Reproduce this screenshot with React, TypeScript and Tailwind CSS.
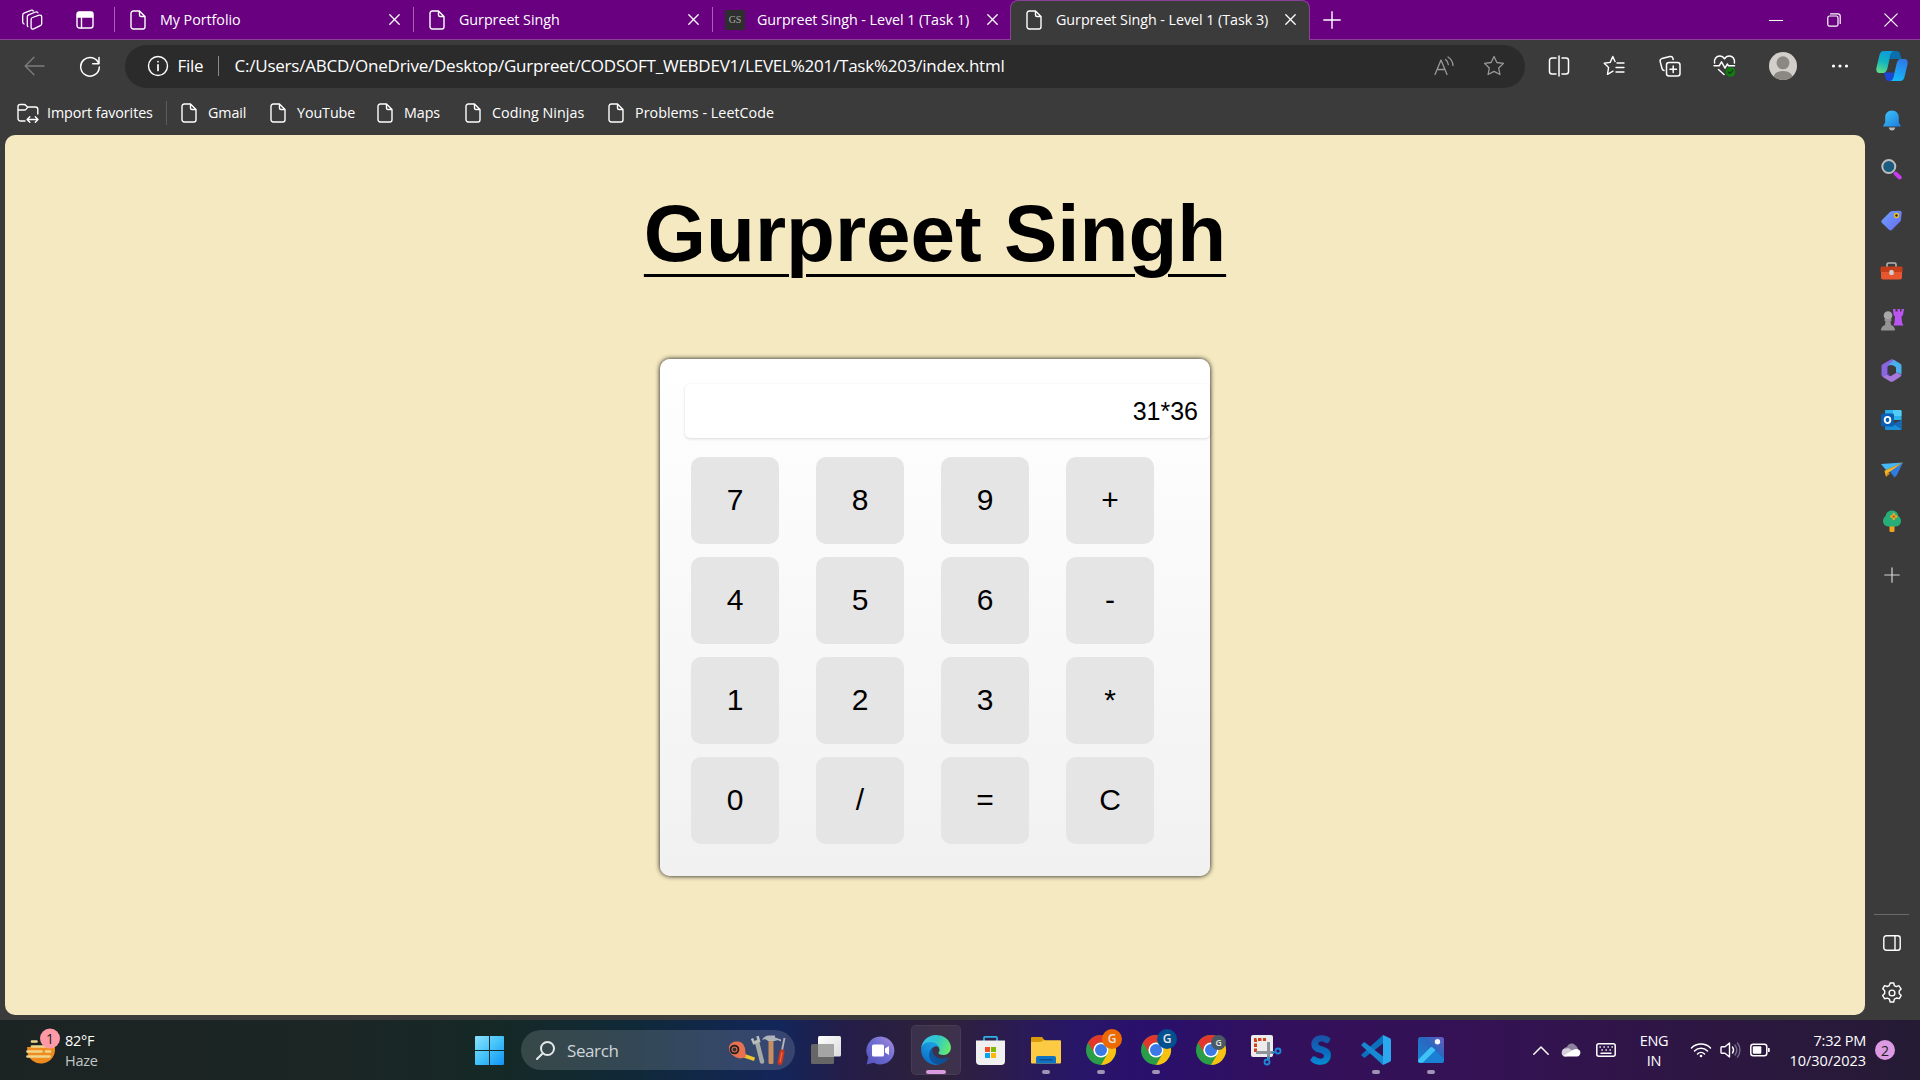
import type { ReactNode } from "react";

type SvgProps = { w: number; h: number; children: ReactNode; className?: string; sw?: number };

function Line({ w, h, children, className = "", sw = 1.4 }: SvgProps) {
  return (
    <svg
      width={w}
      height={h}
      viewBox={`0 0 ${w} ${h}`}
      fill="none"
      stroke="currentColor"
      strokeWidth={sw}
      strokeLinecap="round"
      strokeLinejoin="round"
      className={`shrink-0 ${className}`}
    >
      {children}
    </svg>
  );
}

function Art({ w, h, children, className = "" }: SvgProps) {
  return (
    <svg width={w} height={h} viewBox={`0 0 ${w} ${h}`} className={`shrink-0 overflow-visible ${className}`}>
      {children}
    </svg>
  );
}

const FileIcon = () => (
  <Line w={16} h={20}>
    <path d="M9.5 1H3.2A2.2 2.2 0 0 0 1 3.2v13.6A2.2 2.2 0 0 0 3.2 19h9.6a2.2 2.2 0 0 0 2.2-2.2V6.5L9.5 1v4A1.5 1.5 0 0 0 11 6.5h4" />
  </Line>
);

const CloseIcon = () => (
  <Line w={11} h={11} sw={1.3}>
    <path d="M.8.8l9.4 9.4M10.2.8L.8 10.2" />
  </Line>
);

function Tab({ title, gs }: { title: string; gs?: boolean }) {
  return (
    <div className="flex h-full w-[299px] shrink-0 items-center">
      <div className="h-[25px] w-px bg-[#a662b3]" />
      {gs ? (
        <div className="ml-3 mr-3 flex h-5 w-5 items-center justify-center bg-[#2e2e2e] font-['Liberation_Serif',serif] text-[10px] text-[#a9a9a9]">
          GS
        </div>
      ) : (
        <div className="ml-[15px] mr-[14px]">
          <FileIcon />
        </div>
      )}
      <span className="flex-1 whitespace-nowrap">{title}</span>
      <div className="mr-[13px]">
        <CloseIcon />
      </div>
    </div>
  );
}

function TabStrip() {
  return (
    <div className="flex h-[40px] shrink-0 items-center border-b border-[#8b419a] bg-[#68007f] text-[14.3px] tracking-[-0.04px] text-white">
      <div className="flex w-[114px] shrink-0 items-center gap-[33px] pl-[21px]">
        <Line w={22} h={22} sw={1.3}>
          <path d="M11.5 8.5l6.6-2.3c1.3-.5 2.6.3 2.6 1.6v7c0 .9-.5 1.6-1.4 1.9l-6.600 3.200c-1.300.600-2.600-.2-2.600-1.500v-7.800c0-.9.500-1.700 1.400-2.100z" />
          <path d="M6.800 17.500c-.3-.3-.5-.8-.5-1.300V7.800c0-.9.5-1.500 1.300-1.900L14.500 3c1.100-.4 2 0 2.400.8M3 15c-.800-.4-1.300-1-1.300-1.900V6c0-.9.500-1.500 1.300-1.900l6.900-2.700c1-.4 1.900-.1 2.400.6" />
        </Line>
        <Line w={18} h={18} sw={1.4}>
          <rect x="1" y="1" width="16" height="16" rx="2.5" />
          <path d="M1.500 1.500h15v4.500h-15z" fill="currentColor" />
          <path d="M5.500 6v11" />
        </Line>
      </div>
      <Tab title="My Portfolio" />
      <Tab title="Gurpreet Singh" />
      <Tab title="Gurpreet Singh - Level 1 (Task 1)" gs />
      <div className="-ml-px flex h-[40px] w-[300px] shrink-0 items-center self-start rounded-t-[8px] border border-b-0 border-[#8b419a] bg-[#3b3b3b] pb-[2px]">
        <div className="ml-[15px] mr-[14px]">
          <FileIcon />
        </div>
        <span className="flex-1 whitespace-nowrap">Gurpreet Singh - Level 1 (Task 3)</span>
        <div className="mr-[13px]">
          <CloseIcon />
        </div>
      </div>
      <div className="ml-[13px] flex-1">
        <Line w={18} h={18} sw={1.4}>
          <path d="M9 .8v16.400M.8 9h16.400" />
        </Line>
      </div>
      <div className="flex items-center gap-[43.500px] pr-[22px]">
        <Line w={14} h={14} sw={1.2}>
          <path d="M.5 7.500h13" />
        </Line>
        <Line w={14} h={14} sw={1.2}>
          <rect x=".8" y="3" width="10.200" height="10.200" rx="1.800" />
          <path d="M3.500.8h7.400a2.300 2.300 0 0 1 2.300 2.300v7.400" />
        </Line>
        <Line w={14} h={14} sw={1.2}>
          <path d="M.8.8l12.400 12.400M13.200.8L.8 13.200" />
        </Line>
      </div>
    </div>
  );
}

function Toolbar() {
  return (
    <div className="flex h-[53px] shrink-0 items-center">
      <div className="flex w-[125px] shrink-0 items-center gap-[34px] pb-px pl-[24px]">
        <Line w={21} h={20} className="text-[#7c7c7c]">
          <path d="M20 10H1.500M10 1.200L1.200 10l8.800 8.800" />
        </Line>
        <Line w={22} h={22} sw={1.500}>
          <path d="M19.800 8.800A9.300 9.300 0 1 0 20.300 12M20 2.500v6.300h-6.300" />
        </Line>
      </div>
      <div className="flex h-[43px] w-[1400px] shrink-0 items-center rounded-full bg-[#2b2b2b] pb-px">
        <Line w={22} h={22} className="ml-[21.500px]" sw={1.400}>
          <circle cx="11" cy="11" r="9.500" />
          <path d="M11 9.800v5.700M11 6.500v.2" strokeWidth="1.700" />
        </Line>
        <span className="ml-[9px] w-[40px] text-[17px] tracking-[-0.250px]">File</span>
        <div className="h-5 w-px bg-[#8a8a8a]" />
        <span className="ml-[16px] flex-1 whitespace-nowrap text-[17px] tracking-[-0.230px]">
          C:/Users/ABCD/OneDrive/Desktop/Gurpreet/CODSOFT_WEBDEV1/LEVEL%201/Task%203/index.html
        </span>
        <Line w={20} h={20} className="mr-[29px] text-[#9a9a9a]" sw={1.300}>
          <path d="M1 18.500L7 4l6 14.500M3 13.500h8M11.500 3.500c1.700 1.200 2.600 2.800 2.800 5M14 1c3 1.800 4.700 4.500 5 8.500" />
        </Line>
        <Line w={22} h={22} className="mr-[20px] text-[#9a9a9a]" sw={1.300}>
          <path d="M11 1.500l2.900 6 6.600.9-4.800 4.600 1.200 6.500L11 16.400l-5.900 3.100 1.200-6.500L1.500 8.400l6.600-.9z" />
        </Line>
      </div>
      <div className="flex flex-1 items-center pb-px">
        <Line w={22} h={22} className="ml-[23px]" sw={1.500}>
          <path d="M11 1v20M8 3H4a2.500 2.500 0 0 0-2.500 2.500v11A2.500 2.500 0 0 0 4 19h4M14 3h4a2.500 2.500 0 0 1 2.500 2.500v11A2.500 2.500 0 0 1 18 19h-4" />
        </Line>
        <Line w={22} h={22} className="ml-[33px]" sw={1.400}>
          <path d="M12 6.500L9.800 1.500 7.200 7.400l-6 .8 4.400 4.200-1.100 7L10 16.200M14 8h7M13 12.500h8M13 17h8" />
        </Line>
        <Line w={22} h={22} className="ml-[34px]" sw={1.500}>
          <rect x="7.500" y="7.500" width="13.500" height="13.500" rx="2.500" />
          <path d="M14.200 11v6.500M11 14.200h6.500M5 15.500c-1-.2-1.700-.9-2-2L1.200 6.600c-.4-1.500.3-2.600 1.700-3l8-2c1.500-.4 2.600.3 3 1.700l.3 1.200" />
        </Line>
        <Line w={24} h={24} className="ml-[32px]" sw={1.500}>
          <path d="M1.600 9C.8 4.800 3.500 2 6.700 2c2 0 3.600 1 4.800 2.800C12.700 3 14.300 2 16.300 2c3.300 0 5.900 2.800 5.100 7M1 11.800h5.200l2.300-4 3.500 6.400 2.300-4.200 1.200 1.800H21.500M5.500 15.500l5.500 5" />
          <circle cx="17.500" cy="18" r="4.800" fill="#107c10" stroke="none" />
          <path d="M15.300 18l1.500 1.500 3-3" stroke="#1a3a1a" strokeWidth="1.200" />
        </Line>
        <Art w={28} h={28} className="ml-[32px]">
          <clipPath id="avatar"><circle cx="14" cy="14" r="14" /></clipPath>
          <g clipPath="url(#avatar)">
            <path d="M0 0h28v28H0z" fill="#d2cfcb" />
            <circle cx="14" cy="10.800" r="6.500" fill="#8b8884" />
            <path d="M4 28c0-6 4-9 10-9s10 3 10 9z" fill="#8b8884" />
          </g>
        </Art>
        <Art w={18} h={4} className="ml-[34px]">
          <circle cx="2.500" cy="2" r="1.600" fill="#fff" />
          <circle cx="9" cy="2" r="1.600" fill="#fff" />
          <circle cx="15.500" cy="2" r="1.600" fill="#fff" />
        </Art>
      </div>
    </div>
  );
}

function Bookmark({ title, className }: { title: string; className: string }) {
  return (
    <div className={`flex shrink-0 items-center gap-[11px] whitespace-nowrap ${className}`}>
      <FileIcon />
      <span>{title}</span>
    </div>
  );
}

function Bookmarks() {
  return (
    <div className="flex h-[42px] shrink-0 items-center pb-[2px] pl-[17px] text-[14.300px] tracking-[-0.080px]">
      <Line w={22} h={20} sw={1.400}>
        <path d="M8 18H3.500A2.500 2.500 0 0 1 1 15.500v-12A2 2 0 0 1 3 1.500h4.200c.6 0 1.100.2 1.500.7l1.800 1.800H18.500A2.300 2.300 0 0 1 20.800 6.300V11M1 7h6.500c.6 0 1-.2 1.400-.6l1.800-2M10.500 16.500h10M12.800 13.800l-2.700 2.700 2.700 2.700M18.300 13.800l2.700 2.700-2.700 2.700" />
      </Line>
      <span className="ml-[8px] w-[119px] whitespace-nowrap">Import favorites</span>
      <div className="h-6 w-px bg-[#5c5c5c]" />
      <Bookmark title="Gmail" className="ml-[14px] w-[89px]" />
      <Bookmark title="YouTube" className="w-[107px]" />
      <Bookmark title="Maps" className="w-[88px]" />
      <Bookmark title="Coding Ninjas" className="w-[143px] tracking-[0.050px]" />
      <Bookmark title="Problems - LeetCode" className="tracking-[0.030px]" />
    </div>
  );
}

const KEYS = ["7", "8", "9", "+", "4", "5", "6", "-", "1", "2", "3", "*", "0", "/", "=", "C"];

function Calculator() {
  return (
    <div className="mt-[69px] h-[517px] w-[550px] rounded-[10px] bg-gradient-to-b from-white to-[#f1f1f1] pt-[25px] shadow-[0_0_5px_rgba(0,0,0,0.95)]">
      <div className="ml-[25px] flex h-[54px] items-center justify-end rounded-[5px] bg-white pt-px pr-[12px] text-[25px] shadow-[0_1px_3px_rgba(0,0,0,0.14)]">
        31*36
      </div>
      <div className="ml-[31px] mt-[19px] grid w-max grid-cols-4 gap-x-[37px] gap-y-[13px]">
        {KEYS.map((k) => (
          <button key={k} className="h-[87px] w-[88px] rounded-[10px] bg-[#e5e5e5] pb-[2px] text-[30px]">
            {k}
          </button>
        ))}
      </div>
    </div>
  );
}

function Page() {
  return (
    <div className="ml-[5px] flex h-[880px] flex-col items-center rounded-[10px] bg-[#f5e9c1] font-['Liberation_Sans',Arial,sans-serif] text-black">
      <h1 className="mt-[53px] whitespace-nowrap text-[80px] leading-[92px] font-bold underline decoration-[3px] underline-offset-[13px]">
        Gurpreet Singh
      </h1>
      <div className="mt-[10px]">
        <Calculator />
      </div>
    </div>
  );
}

function SideItem({ children }: { children: ReactNode }) {
  return <div className="flex h-[50px] items-center justify-center">{children}</div>;
}

function Sidebar() {
  return (
    <div className="flex w-[55px] shrink-0 flex-col pr-[2px]">
      <div className="flex h-[53px] items-center justify-center pb-[2px]">
        <Art w={32} h={32}>
          <defs>
            <linearGradient id="cpA" x1="0.600" y1="0" x2="0.300" y2="1">
              <stop offset="0.100" stopColor="#0e9fd8" />
              <stop offset="0.500" stopColor="#12b5c0" />
              <stop offset="1" stopColor="#5fdc85" />
            </linearGradient>
            <linearGradient id="cpB" x1="0.700" y1="0" x2="0.300" y2="1">
              <stop offset="0" stopColor="#2f78e8" />
              <stop offset="1" stopColor="#14bdf8" />
            </linearGradient>
          </defs>
          <path d="M15 1h5.500c2 0 3 1 3.500 3l1.500 5H14z" fill="#0a6fae" />
          <path d="M17 31h-4c-2 0-3-1-3.500-3L8 22.500h10z" fill="#1c48d8" />
          <path d="M8 1h10c-2.500.4-3 2-3.700 4.500L11.500 18c-.9 3.500-2 5-5 5H4c-3 0-4.300-2-3.500-5.500L3.500 5C4.300 2.200 5.500 1 8 1z" fill="url(#cpA)" />
          <path d="M24 31H14c2.500-.4 3-2 3.700-4.500L20.500 14c.9-3.500 2-5 5-5H28c3 0 4.300 2 3.500 5.500L28.500 27c-.8 2.800-2 4-4.500 4z" fill="url(#cpB)" />
        </Art>
      </div>
      <div className="mt-[2px] flex flex-col">
        <SideItem>
          <Art w={18} h={21}>
            <defs>
              <linearGradient id="bell" x1="0" y1="0" x2="1" y2="1">
                <stop offset="0" stopColor="#3fc8f8" />
                <stop offset="1" stopColor="#1c7be0" />
              </linearGradient>
            </defs>
            <path d="M5.800 17.500h6.400c-.3 2-1.500 3-3.200 3s-2.900-1-3.200-3z" fill="#b9b9b9" />
            <path d="M9 .5c4 0 6.800 2.900 6.800 6.800v5L18 16.500H0l2.200-4.200v-5C2.200 3.400 5 .5 9 .5z" fill="url(#bell)" />
          </Art>
        </SideItem>
        <SideItem>
          <Art w={21} h={21} className="-mt-[2px]">
            <path d="M14.500 14.500l4.300 4" stroke="#c93bf0" strokeWidth="4" strokeLinecap="round" />
            <circle cx="7.800" cy="7.500" r="6.500" fill="#1b5b80" stroke="#bdbdbd" strokeWidth="2" />
          </Art>
        </SideItem>
        <SideItem>
          <Art w={21} h={21}>
            <defs>
              <linearGradient id="tag" x1="0" y1="0" x2="1" y2="0.800">
                <stop offset="0" stopColor="#6ca4fb" />
                <stop offset="1" stopColor="#6b6df4" />
              </linearGradient>
            </defs>
            <path d="M12 1l6.500-.3c1.500 0 2.200.8 2.200 2.300L20 9.500c0 1-.4 1.500-1 2.200l-8 8c-1 1-2 1-3 0L1 13c-1-1-1-2 0-3l8-8c1-.8 1.800-1 3-1z" fill="url(#tag)" />
            <circle cx="15.500" cy="5.500" r="2" fill="#222" stroke="#f0c419" strokeWidth="1.400" />
          </Art>
        </SideItem>
        <SideItem>
          <Art w={23} h={18} className="mt-px">
            <path d="M7 5V2.500C7 1.500 7.500 1 8.500 1h6c1 0 1.500.5 1.500 1.500V5" fill="none" stroke="#b6b6b6" strokeWidth="1.600" />
            <path d="M1 9h21v6.500a2 2 0 0 1-2 2H3a2 2 0 0 1-2-2z" fill="#e8562f" />
            <path d="M2 4.500h19c1 0 1.500.5 1.500 1.500v4H.5V6c0-1 .5-1.500 1.500-1.500z" fill="#c43e1c" />
            <rect x="9.300" y="8" width="4.400" height="5" rx="1.500" fill="#cfcfcf" />
          </Art>
        </SideItem>
        <SideItem>
          <Art w={24} h={24}>
            <path d="M13 1h2.500v2.500h2V1H20v2.500h1.500V1H24l-1 6-1.500 1.500.5 6 1.500 3H13.500l1-3 .5-6L13.500 7z" fill="#bb55f2" />
            <circle cx="8" cy="7.500" r="4.300" fill="#a8a8a8" />
            <path d="M4.500 11h7v2h-1l.5 4c2.500 1 4 2.500 4 5.500H1c0-3 1.500-4.500 4-5.500l.5-4h-1z" fill="#949494" />
          </Art>
        </SideItem>
        <SideItem>
          <Art w={21} h={23}>
            <path d="M10 .5L2 5C1 5.600.5 6.500.5 7.500v8c0 1.200.5 2 1.500 2.500l4.500 2V8.500c0-1 .4-1.700 1.300-2.200L15 2 12 .5c-.7-.3-1.300-.3-2 0z" fill="#8a65e0" />
            <path d="M7 6.500L13 1l6 3.500c1 .6 1.500 1.500 1.500 2.500v8.500L15 13V9.500c0-.9-.3-1.500-1-2l-3-1.600z" fill="#49b0ec" />
            <path d="M2 18l4.500-2.500 3 1.700L15 14v-1l5.500 3c0 .8-.5 1.500-1.500 2.100l-7 4.300c-1 .5-1.800.5-2.800 0z" fill="#a978dd" />
            <path d="M6.500 8v8l3 1.200L7.500 14z" fill="#5a38b4" />
            <path d="M11 6.500l3.600 2.200v4.600L11 15.500l-3.500-2V8.700z" fill="#3b3b3b" />
          </Art>
        </SideItem>
        <SideItem>
          <Art w={21} h={20}>
            <path d="M5 0h14c1 0 1.500.5 1.500 1.500V10H4V1C4 .4 4.400 0 5 0z" fill="#2bb3ee" />
            <path d="M12 0h7c1 0 1.500.5 1.500 1.500V6H12z" fill="#52ccf7" />
            <path d="M4 10l8.500 5L20.500 10v8.500c0 1-.5 1.500-1.500 1.500H5.500C4.500 20 4 19.500 4 18.500z" fill="#1a8fd8" />
            <path d="M20.500 10v9L12 14z" fill="#1467b5" />
            <rect x="0" y="3.500" width="13" height="13" rx="1.500" fill="#0a5fb4" />
            <ellipse cx="6.500" cy="10" rx="2.800" ry="3.100" fill="none" stroke="#fff" strokeWidth="1.900" />
          </Art>
        </SideItem>
        <SideItem>
          <Art w={22} h={16}>
            <path d="M0 2L22 .5 5 8z" fill="#44b7f5" />
            <path d="M22 .5L16 13l-2.500 2.500L8.500 9z" fill="#2f7be0" />
            <path d="M22 .5L5 8l-1.500 1 1.500 6 2-4z" fill="#f4b321" />
            <path d="M7 10.500L5 15l4-3.500z" fill="#d98a0e" />
          </Art>
        </SideItem>
        <SideItem>
          <Art w={18} h={22} className="mt-[2px]">
            <rect x="6.500" y="14" width="5" height="8" rx="1" fill="#f0a31c" />
            <path d="M9 .5c3.500 0 6 2.300 6.300 5.500 1.700 1.200 2.700 3 2.700 5 0 3.300-2.500 5.500-6 5.500H6c-3.500 0-6-2.200-6-5.500 0-2 1-3.800 2.700-5C3 2.800 5.500.5 9 .5z" fill="#27ad78" />
            <path d="M10.800 4v5M8.300 6.500h5" stroke="#f6a723" strokeWidth="2.400" strokeLinecap="round" />
            <circle cx="10.800" cy="6.500" r="1.100" fill="#a64b10" />
          </Art>
        </SideItem>
        <div className="mt-[3px] flex h-[54px] items-center justify-center">
          <Line w={16} h={16} sw={1.200} className="text-[#d6d6d6]">
            <path d="M8 .8v14.400M.8 8h14.400" />
          </Line>
        </div>
      </div>
      <div className="mt-auto flex flex-col items-center pb-[5px]">
        <div className="h-px w-[35px] bg-[#6a6a6a]" />
        <div className="flex h-[56px] items-center">
          <Line w={18} h={16} sw={1.400}>
            <rect x=".8" y=".8" width="16.400" height="14.400" rx="2.500" />
            <path d="M12 1v14" />
          </Line>
        </div>
        <div className="flex h-[44px] items-center">
          <Line w={22} h={22} sw={1.400}>
            <circle cx="11" cy="11" r="2.900" />
            <path d="M9.200 1h3.600l.5 2.700 2 .9 2.500-.9 2.300 3.200-1.900 2v2.500l2 2-1.900 3.200-2.900-.6-2 1.200-.7 2.800H9.200l-.8-2.800-2-1.100-2.800.6-2-3.200 2.100-2.100V8.800l-2-2L3.600 3.700l2.700.8 2-.9z" />
          </Line>
        </div>
      </div>
    </div>
  );
}

function Chrome({ badge }: { badge: "orange" | "blue" | "gray" }) {
  const fill = badge === "orange" ? "#ec6a00" : badge === "blue" ? "#01508f" : "#4a5a64";
  const big = badge !== "gray";
  return (
    <Art w={30} h={30}>
      <circle cx="15" cy="15" r="15" fill="#2a9d48" />
      <path d="M15 0A15 15 0 0 1 28 7.500H15A7.500 7.500 0 0 0 8.500 18.700L2 7.500A15 15 0 0 1 15 0z" fill="#e3372d" />
      <path d="M28 7.500A15 15 0 0 1 15 30L21.500 18.750A7.500 7.500 0 0 0 15 7.500H28z" fill="#fbc111" />
      <circle cx="15" cy="15" r="7.600" fill="#fff" />
      <circle cx="15" cy="15" r="6" fill="#3b79e6" />
      <circle cx={big ? 26 : 22.500} cy={big ? 4 : 7.500} r={big ? 10 : 7.500} fill={fill} />
      <text
        x={big ? 26 : 22.500}
        y={big ? 8.300 : 10.600}
        textAnchor="middle"
        fontSize={big ? 12 : 8.500}
        fontWeight="600"
        fill="#e9e4e0"
        fontFamily="Open Sans, sans-serif"
      >
        G
      </text>
    </Art>
  );
}

function Task({ children, running }: { children: ReactNode; running?: boolean }) {
  return (
    <div className="relative flex h-[60px] w-[55px] shrink-0 items-center justify-center">
      {children}
      {running && <div className="absolute bottom-[6px] left-[23.500px] h-1 w-2 rounded-full bg-[#a094b4]" />}
    </div>
  );
}

function SearchTools() {
  return (
    <Art w={58} h={32}>
      <path d="M14 19l13 4.500-1 3.500-12-4z" fill="#edc52c" />
      <path d="M1 13C1.500 9.500 5 7.500 9 7.500c4.500 0 7 2.500 8 7l1 8.500-5.500 1.500C6 23.500.2 19 1 13z" fill="#e8714f" />
      <circle cx="6.500" cy="15.500" r="4.800" fill="#1e1e20" />
      <circle cx="6.500" cy="15.500" r="3" fill="#e8714f" />
      <circle cx="6.500" cy="15.500" r="1.900" fill="#333" />
      <path d="M29 8l5 19.500" stroke="#a4a8a6" strokeWidth="4.500" strokeLinecap="round" />
      <path d="M24 4.500l2 4.500 5-1.800-1.500-5" fill="none" stroke="#b9bdbb" strokeWidth="2.600" />
      <rect x="40.500" y="6" width="5" height="24" rx="1.500" fill="#c58e63" />
      <path d="M34 6c1.500-3 4-4.500 7-4.500h6v2l6 2v2c-3-2-5-1.500-6-.5h-7c-2-2-4-2-6-1z" fill="#aeb4ba" />
      <path d="M56.500 4l-3 15" stroke="#b7b7b7" strokeWidth="1.800" />
      <path d="M54 18l-2 10.500" stroke="#c7361d" strokeWidth="5" strokeLinecap="round" />
      <path d="M54 18l-2 10.500" stroke="#f07050" strokeWidth="1.200" />
    </Art>
  );
}

function Taskbar() {
  return (
    <div className="flex h-[60px] shrink-0 items-center bg-[linear-gradient(90deg,#1c2423_0%,#1b2625_18%,#152926_26%,#102938_33%,#13265a_40.500%,#241d48_44%,#2e2139_49%,#281668_56%,#2a106c_60%,#33105a_68%,#341253_78%,#2c1740_90%,#251b34_100%)] text-white">
      <div className="flex w-[475px] shrink-0 items-center">
        <Art w={30} h={30} className="ml-[26px]">
          <path d="M1.200 12H28.800A14 14 0 0 1 1.200 17z" fill="#f08c1e" />
          <path d="M2 18h26.500A14 14 0 0 1 2 18z" fill="#f08c1e" />
          <path d="M6 6.500h4.500M6 11.500h21M1.500 16.500h14M20 16.500h4M1.500 21.500h22" stroke="#eed58c" strokeWidth="2.700" strokeLinecap="round" />
          <circle cx="24" cy="3.500" r="10" fill="#fe9aa5" />
          <text x="24" y="8.500" textAnchor="middle" fontSize="14" fill="#222" fontFamily="Open Sans, sans-serif">1</text>
        </Art>
        <div className="ml-[9px] pt-px text-[14.500px] leading-5 tracking-[-0.300px]">
          <div>82°F</div>
          <div className="text-[#c3c7c6]">Haze</div>
        </div>
      </div>
      <Art w={29} h={29} className="mt-px">
        <defs>
          <linearGradient id="win" x1="0" y1="0" x2="1" y2="1">
            <stop offset="0" stopColor="#8ce3fb" />
            <stop offset="0.500" stopColor="#43c2fa" />
            <stop offset="1" stopColor="#0f93f5" />
          </linearGradient>
        </defs>
        <path d="M1 0h13v14H0V1a1 1 0 0 1 1-1zM15 0h13a1 1 0 0 1 1 1v13H15zM0 15h14v14H1a1 1 0 0 1-1-1zM15 15h14v13a1 1 0 0 1-1 1H15z" fill="url(#win)" />
      </Art>
      <div className="ml-[17px] flex h-10 w-[274px] shrink-0 items-center rounded-full bg-white/15">
        <Line w={19} h={19} className="ml-[15px] text-[#e4e8e8]" sw={2}>
          <circle cx="11.500" cy="7.500" r="6.500" />
          <path d="M6.800 12.200L1 18" />
        </Line>
        <span className="ml-[12px] flex-1 pt-px text-[17px] tracking-[-0.400px] text-[#d0d5d9]">Search</span>
        <div className="mr-[9px]">
          <SearchTools />
        </div>
      </div>
      <div className="ml-[3px] flex items-center">
        <Task>
          <Art w={30} h={28}>
            <defs>
              <linearGradient id="tv" x1="0" y1="0" x2="1" y2="1">
                <stop offset="0" stopColor="#ffffff" />
                <stop offset="1" stopColor="#dcdcdc" />
              </linearGradient>
            </defs>
            <rect x="0" y="8" width="23" height="20" rx="1.500" fill="#666" />
            <rect x="7" y="0" width="23" height="20.500" rx="1.500" fill="url(#tv)" />
            <path d="M7 8h16v12.500H7z" fill="#a5a5a5" />
          </Art>
        </Task>
        <Task>
          <Art w={29} h={29}>
            <defs>
              <linearGradient id="chat" x1="0" y1="1" x2="1" y2="0">
                <stop offset="0" stopColor="#5552bd" />
                <stop offset="0.500" stopColor="#6a6bd0" />
                <stop offset="1" stopColor="#a98de0" />
              </linearGradient>
            </defs>
            <path d="M14.500.5a14 14 0 1 1-6.800 26.300L.5 28.500l1.800-7A14 14 0 0 1 14.500.5z" fill="url(#chat)" />
            <rect x="6" y="8.500" width="12" height="12" rx="1.500" fill="#fff" />
            <path d="M19 12.500l4-2.500v9l-4-2.500z" fill="#fff" />
          </Art>
        </Task>
        <div className="relative mx-[2.500px] flex h-[50px] w-[50px] items-center justify-center rounded-[5px] border border-white/5 bg-white/8">
          <svg width="30" height="30" viewBox="-1 0 258 256" className="-mt-[1px]">
            <defs>
              <linearGradient id="edA" x1="0.100" y1="0.500" x2="1" y2="0.500">
                <stop offset="0" stopColor="#0c59a4" />
                <stop offset="1" stopColor="#114a8b" />
              </linearGradient>
              <linearGradient id="edB" x1="0.700" y1="0.200" x2="0.300" y2="1">
                <stop offset="0" stopColor="#1b9de2" />
                <stop offset="1" stopColor="#0a6cc4" />
              </linearGradient>
              <linearGradient id="edC" x1="0" y1="0.300" x2="1" y2="0.600">
                <stop offset="0" stopColor="#35c1f1" />
                <stop offset="0.500" stopColor="#2fc8c8" />
                <stop offset="1" stopColor="#66eb6e" />
              </linearGradient>
            </defs>
            <path fill="url(#edA)" d="M231.100 190.500c-3.400 1.800-6.900 3.400-10.500 4.700-11.500 4.300-23.600 6.500-35.900 6.500-47.300 0-88.500-32.500-88.500-74.300.1-11.400 6.400-21.900 16.400-27.300-42.800 1.800-53.800 46.400-53.800 72.500 0 73.900 68.100 81.400 82.800 81.400 7.900 0 19.800-2.300 27-4.600l1.300-.4c27.600-9.500 51-28.100 66.600-52.800 1.200-1.900.6-4.300-1.200-5.500-1.300-.8-2.900-.9-4.200-.2z" />
            <path fill="url(#edB)" d="M105.700 241.400c-8.900-5.500-16.600-12.800-22.700-21.300-26.300-36-18.400-86.500 17.600-112.800 3.800-2.700 7.700-5.200 11.900-7.200 3.100-1.500 8.400-4.100 15.500-4 10.100.1 19.600 4.900 25.700 13 4 5.400 6.300 11.900 6.400 18.700 0-.2 24.500-79.600-80-79.600-43.900 0-80 41.700-80 78.200-.2 19.300 4 38.500 12.100 56 27.600 58.800 94.800 87.600 156.400 67.100-21.100 6.600-44.100 3.700-62.900-8.100z" />
            <path fill="url(#edC)" d="M152.300 148.900c-.9 1-3.400 2.500-3.400 5.600 0 2.600 1.700 5.200 4.800 7.300 14.400 10.100 41.700 8.700 41.800 8.700 10.700 0 21.300-2.900 30.500-8.400 18.900-11 30.500-31.200 30.500-53.100.3-22.400-8-37.300-11.300-43.900C224 23.500 177.700 0 127.300 0 56.900 0-.1 56.200-1 126.200c.5-36.500 36.800-66 80-66 3.500 0 23.500.3 42 10.100 16.300 8.600 24.900 18.900 30.800 29.200 6.200 10.700 7.300 24.100 7.300 29.500 0 5.300-2.700 13.300-7.800 19.900z" />
          </svg>
          <div className="absolute bottom-0 left-[14px] h-1 w-5 rounded-full bg-[#d99ae0]" />
        </div>
        <Task>
          <Art w={29} h={29}>
            <path d="M8 6V1.500C8 1 8.300.8 8.800.8h11.400c.5 0 .8.200.8.700V6" fill="none" stroke="#2fb0e8" strokeWidth="1.700" />
            <path d="M0 4.500h29V25a4 4 0 0 1-4 4H4a4 4 0 0 1-4-4z" fill="#f0f0f0" />
            <path d="M9 11h5v5H9z" fill="#f05023" />
            <path d="M15 11h5v5h-5z" fill="#7fba00" />
            <path d="M9 17h5v5H9z" fill="#04a4ef" />
            <path d="M15 17h5v5h-5z" fill="#fcb900" />
          </Art>
        </Task>
        <Task running>
          <Art w={30} h={27}>
            <path d="M1 0h10l3 3.500v5H0V1a1 1 0 0 1 1-1z" fill="#d99a0c" />
            <path d="M0 5h10l2.500-1.700H29a1 1 0 0 1 1 1V25.500a1 1 0 0 1-1 1H1a1 1 0 0 1-1-1z" fill="#fdcb43" />
            <path d="M5 26.500V21a2 2 0 0 1 2-2h16a2 2 0 0 1 2 2v5.500z" fill="#0f73c4" />
            <path d="M9 22.800h12" stroke="#0a4f93" strokeWidth="1.400" strokeLinecap="round" />
          </Art>
        </Task>
        <Task running><Chrome badge="orange" /></Task>
        <Task running><Chrome badge="blue" /></Task>
        <Task><Chrome badge="gray" /></Task>
        <Task>
          <Art w={30} h={30}>
            <rect x="0" y="0" width="22" height="22" rx="2" fill="#ececec" />
            <path d="M4.500 17V4.500H15" fill="none" stroke="#d2401a" strokeWidth="3" strokeDasharray="3.500 1.500" />
            <path d="M5 17.500h18M17.500 7v17" stroke="#8d949a" strokeWidth="3" />
            <circle cx="27" cy="16" r="2.500" fill="none" stroke="#1c8ad8" strokeWidth="1.800" />
            <circle cx="16" cy="27" r="2.500" fill="none" stroke="#1c8ad8" strokeWidth="1.800" />
            <path d="M21 18l4-1.500M17 24.500l.8-3" stroke="#1c8ad8" strokeWidth="1.600" />
          </Art>
        </Task>
        <Task>
          <Art w={24} h={30}>
            <defs>
              <linearGradient id="ess" x1="0" y1="0" x2="0" y2="1">
                <stop offset="0" stopColor="#233f98" />
                <stop offset="0.600" stopColor="#0a6fc0" />
                <stop offset="1" stopColor="#069be0" />
              </linearGradient>
            </defs>
            <text x="12" y="28.500" textAnchor="middle" fontSize="38" fontWeight="900" fill="url(#ess)" stroke="url(#ess)" strokeWidth="1.500" strokeLinejoin="round" fontFamily="Lato, sans-serif">S</text>
          </Art>
        </Task>
        <Task running>
          <Art w={30} h={30}>
            <path d="M22 0L.7 19.200a1 1 0 0 0 0 1.500l2 1.800c.4.300.9.300 1.300 0L22 8.500z" fill="#0b71bd" />
            <path d="M22 30L.7 10.800a1 1 0 0 1 0-1.500l2-1.800c.4-.3.9-.3 1.300 0L22 21.500z" fill="#1789d2" />
            <path d="M22 0l7 3.300c.7.300 1 .9 1 1.700v20c0 .8-.3 1.400-1 1.700L22 30z" fill="#2ba8ee" />
          </Art>
        </Task>
        <Task running>
          <Art w={26} h={26}>
            <defs>
              <linearGradient id="ph" x1="0" y1="1" x2="1" y2="0">
                <stop offset="0" stopColor="#1688d6" />
                <stop offset="0.600" stopColor="#2b66c0" />
                <stop offset="1" stopColor="#6a5cc0" />
              </linearGradient>
              <clipPath id="phc"><rect width="26" height="26" rx="2.500" /></clipPath>
            </defs>
            <g clipPath="url(#phc)">
              <path d="M0 0h26v26H0z" fill="url(#ph)" />
              <path d="M4 26L14.500 11l11.500 10.500V26z" fill="#1b7fd4" />
              <path d="M0 23L12 10.800c1-1 2-1 3 0L17.500 13 5 25.500 0 26z" fill="#3fc3f6" />
              <circle cx="19.500" cy="4.800" r="2.700" fill="#f4f6fb" />
            </g>
          </Art>
        </Task>
      </div>
      <div className="ml-auto flex shrink-0 items-center">
        <Line w={16} h={9} sw={1.500}>
          <path d="M.8 8.200L8 1l7.200 7.200" />
        </Line>
        <Art w={20} h={14} className="ml-[12px]">
          <path d="M2 9C2 6 4 4 6 4c1-3 5-5 8-2 2 1 3 3 3 5l-7 5z" fill="#8c829c" />
          <path d="M4 13.500a4 4 0 1 1 1.500-8c1.500-.6 3 0 4 1l7 5z" fill="#d5d0dc" />
          <path d="M4 13.500h12a3.800 3.800 0 0 0 1-7.300c-3-.8-5 .4-7 2L2 13z" fill="#fff" />
        </Art>
        <Line w={20} h={14} className="ml-[15px]" sw={1.500}>
          <rect x=".8" y=".8" width="18.400" height="12.400" rx="2" />
          <path d="M4 4h.3M8 4h.3M12 4h.3M16 4h.3M6 7h.3M10 7h.3M14 7h.3M5 10.300h10" />
        </Line>
        <div className="ml-[23px] w-[30px] pt-px text-center text-[14.500px] leading-5 tracking-[-0.300px]">
          <div>ENG</div>
          <div>IN</div>
        </div>
        <Line w={22} h={16} className="ml-[21px]" sw={1.500}>
          <path d="M1.500 6c5.200-5.300 13.800-5.300 19 0M4.500 9c3.600-3.600 9.400-3.600 13 0M7.500 12c2-2 5-2 7 0" />
          <circle cx="11" cy="14" r="1.300" fill="currentColor" stroke="none" />
        </Line>
        <Line w={21} h={18} className="ml-[8px]" sw={1.400}>
          <path d="M1 6.500c0-.5.300-.8.800-.8H5L9.500 2v14L5 12.300H1.800c-.5 0-.8-.3-.8-.8zM12.500 6c1.300 1.800 1.300 4.200 0 6" />
          <path d="M15 4c2.200 3 2.200 7 0 10M17.500 2c3.200 4 3.200 10 0 14" className="text-[#7a6c8a]" stroke="currentColor" />
        </Line>
        <Art w={20} h={14} className="ml-[9px]">
          <rect x=".8" y="1.300" width="16" height="11.400" rx="2.500" fill="none" stroke="#fff" strokeWidth="1.500" />
          <rect x="2.800" y="3.300" width="8.500" height="7.400" rx="1" fill="#fff" />
          <path d="M18 5v4h.8c.6 0 1-.4 1-1V6c0-.6-.4-1-1-1z" fill="#fff" />
        </Art>
        <div className="ml-[16px] w-[80px] pt-px text-right text-[14.500px] leading-5 tracking-[-0.050px]">
          <div className="tracking-[-0.250px]">7:32 PM</div>
          <div>10/30/2023</div>
        </div>
        <div className="ml-[9px] mr-[25px] flex h-5 w-5 items-center justify-center rounded-full bg-[#db9ae1] text-[14px] text-[#222]">2</div>
      </div>
    </div>
  );
}

export default function App() {
  return (
    <div className="flex h-[1080px] w-[1920px] flex-col overflow-hidden bg-[#3b3b3b] font-['Open_Sans','Noto_Sans',sans-serif] text-white">
      <TabStrip />
      <div className="flex h-[980px] shrink-0">
        <div className="flex w-[1865px] shrink-0 flex-col">
          <Toolbar />
          <Bookmarks />
          <Page />
        </div>
        <Sidebar />
      </div>
      <Taskbar />
    </div>
  );
}
